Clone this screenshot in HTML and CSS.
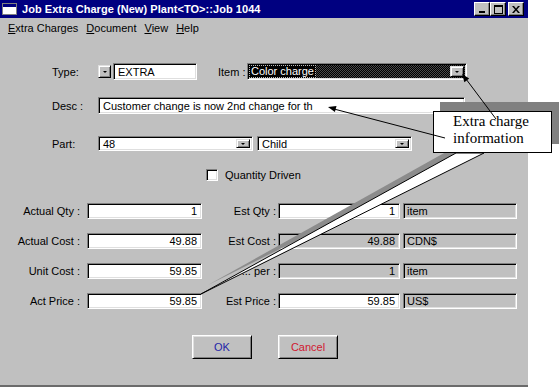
FILE: index.html
```html
<!DOCTYPE html>
<html lang="en">
<head>
    <meta charset="UTF-8">
    <title>Job Extra Charge</title>
    <link rel="stylesheet" href="styles.css">
</head>
<body>
    <div class="window">
        <div class="titlebar">
            <svg class="app-icon" width="15" height="12" viewBox="0 0 15 12">
                <rect x="0.5" y="0.5" width="14" height="11" fill="#fff" stroke="#808080"/>
                <rect x="1" y="1" width="13" height="3" fill="#000080"/>
            </svg>
            <span class="title">Job Extra Charge (New) Plant&lt;TO&gt;::Job 1044</span>
            <div class="caption-buttons">
                <span class="cap-btn"><svg width="8" height="7" viewBox="0 0 8 7"><rect x="1" y="5" width="6" height="2" fill="#000"/></svg></span>
                <span class="cap-btn"><svg width="9" height="9" viewBox="0 0 9 9"><rect x="0.5" y="0.5" width="8" height="8" fill="none" stroke="#000"/><rect x="0" y="0" width="9" height="2" fill="#000"/></svg></span>
                <span class="cap-btn close"><svg width="8" height="7" viewBox="0 0 8 7"><path d="M0 0h2l2 2.5 2-2.5h2l-3 3.5 3 3.5h-2l-2-2.5-2 2.5h-2l3-3.5z" fill="#000"/></svg></span>
            </div>
        </div>
        <div class="menubar">
            <span><u>E</u>xtra Charges</span>
            <span><u>D</u>ocument</span>
            <span><u>V</u>iew</span>
            <span><u>H</u>elp</span>
        </div>

        <div class="form">
            <div class="row row-type">
                <span class="lbl">Type:</span>
                <span class="drop-btn small"></span>
                <div class="field extra">EXTRA</div>
                <span class="lbl-item">Item :</span>
                <div class="field combo item">
                    <span class="sel">Color charge</span>
                    <span class="drop-btn"></span>
                </div>
            </div>
            <div class="row row-desc">
                <span class="lbl">Desc :</span>
                <div class="field desc">Customer change is now 2nd change for th</div>
            </div>
            <div class="row row-part">
                <span class="lbl">Part:</span>
                <div class="field combo part">
                    <span>48</span>
                    <span class="drop-btn"></span>
                </div>
                <div class="field combo child">
                    <span>Child</span>
                    <span class="drop-btn"></span>
                </div>
            </div>
            <div class="row row-check">
                <span class="checkbox"></span>
                <span>Quantity Driven</span>
            </div>

            <div class="amounts">
                <span class="alabel">Actual Qty :</span>
                <div class="field num">1</div>
                <span class="elabel">Est Qty :</span>
                <div class="field num">1</div>
                <div class="field unit">item</div>

                <span class="alabel">Actual Cost :</span>
                <div class="field num">49.88</div>
                <span class="elabel">Est Cost :</span>
                <div class="field num disabled">49.88</div>
                <div class="field unit">CDN$</div>

                <span class="alabel">Unit Cost :</span>
                <div class="field num">59.85</div>
                <span class="elabel">... per :</span>
                <div class="field num disabled">1</div>
                <div class="field unit">item</div>

                <span class="alabel">Act Price :</span>
                <div class="field num">59.85</div>
                <span class="elabel">Est Price :</span>
                <div class="field num">59.85</div>
                <div class="field unit">US$</div>
            </div>

            <div class="buttons">
                <button class="btn ok">OK</button>
                <button class="btn cancel">Cancel</button>
            </div>
        </div>
    </div>

    <!-- annotation drawn over the dialog -->
    <svg class="callout-lines" width="559" height="387" viewBox="0 0 559 387">
        <rect x="440" y="102" width="119" height="42" fill="#808080"/>
        <polygon points="462,143 492,143 208,285" fill="#8c8c8c"/>
        <polygon points="456,153 484,153 201,294" fill="#fff" stroke="#000" stroke-width="1"/>
        <rect x="433.5" y="111.5" width="118" height="41" fill="#fff" stroke="#000"/>
        <line x1="496" y1="119" x2="466" y2="79" stroke="#000"/>
        <polygon points="462,74 469.2,78.6 464.4,82.2" fill="#000"/>
        <line x1="445" y1="138" x2="334" y2="109" stroke="#000"/>
        <polygon points="328,107 336.5,106.1 334.9,111.9" fill="#000"/>
    </svg>
    <div class="callout-text">Extra charge<br>information</div>
</body>
</html>
```

FILE: styles.css
```css
body {
    margin: 0;
    width: 559px;
    height: 387px;
    overflow: hidden;
    position: relative;
    background: #fff;
    font-family: "Liberation Sans", Arial, sans-serif;
    font-size: 11px;
    color: #000;
}
.window {
    width: 528px;
    height: 385px;
    background: #c0c0c0;
    border-bottom: 2px solid #6b6b6b;
}
.titlebar {
    height: 18px;
    background: #000080;
    color: #fff;
    display: flex;
    align-items: center;
    padding-left: 2px;
}
.app-icon {
    margin-right: 5px;
}
.title {
    flex: 1;
    font-weight: bold;
    font-size: 11px;
    letter-spacing: 0.05px;
}
.caption-buttons {
    display: flex;
    margin-right: 4px;
}
.cap-btn {
    width: 16px;
    height: 14px;
    box-sizing: border-box;
    background: #c0c0c0;
    border: 1px solid;
    border-color: #fff #000 #000 #fff;
    box-shadow: inset -1px -1px #808080;
    display: flex;
    align-items: center;
    justify-content: center;
}
.cap-btn.close {
    margin-left: 2px;
}
.menubar {
    height: 20px;
    display: flex;
    align-items: center;
    gap: 8px;
    padding-left: 8px;
}
.form {
    padding-top: 25px;
}
.row {
    display: flex;
    align-items: center;
    padding-left: 52px;
}
.lbl {
    width: 46px;
}
.field {
    box-sizing: border-box;
    height: 100%;
    background: #fff;
    border: 1px solid;
    border-color: #808080 #fff #fff #808080;
    box-shadow: inset 1px 1px #000, inset -1px -1px #dfdfdf;
    display: flex;
    align-items: center;
    padding: 0 4px;
    white-space: nowrap;
    overflow: hidden;
}
.drop-btn {
    box-sizing: border-box;
    width: 14px;
    background: #c0c0c0;
    border: 1px solid;
    border-color: #dfdfdf #000 #000 #dfdfdf;
    box-shadow: inset 1px 1px #fff, inset -1px -1px #808080;
    display: flex;
    align-items: center;
    justify-content: center;
}
.drop-btn::after {
    content: "";
    border-left: 2px solid transparent;
    border-right: 2px solid transparent;
    border-top: 2px solid #000;
}
.row-type {
    height: 17px;
}
.drop-btn.small {
    width: 13px;
    height: 13px;
}
.extra {
    width: 84px;
    margin-left: 2px;
}
.lbl-item {
    margin-left: 21px;
    width: 29px;
}
.combo {
    justify-content: space-between;
    padding: 2px 2px 2px 4px;
}
.combo .drop-btn {
    height: 100%;
}
.item {
    width: 220px;
    padding-left: 2px;
    background: repeating-conic-gradient(#000 0 25%, #4a4a4a 0 50%) 0 0 / 2px 2px;
}
.sel {
    background: #000;
    color: #fff;
    outline: 1px dotted #bbb;
    padding: 0 1px;
    line-height: 11px;
}
.row-desc {
    height: 17px;
    margin-top: 17px;
}
.desc {
    width: 367px;
}
.row-part {
    height: 15px;
    margin-top: 22px;
}
.part,
.child {
    width: 155px;
}
.child {
    margin-left: 4px;
}
.row-check {
    height: 12px;
    margin-top: 18px;
    padding-left: 206px;
    gap: 7px;
}
.checkbox {
    box-sizing: border-box;
    width: 12px;
    height: 12px;
    background: #fff;
    border: 1px solid;
    border-color: #808080 #fff #fff #808080;
    box-shadow: inset 1px 1px #000, inset -1px -1px #dfdfdf;
}
.amounts {
    display: grid;
    grid-template-columns: 87px 115px 76px 122px 117px;
    grid-auto-rows: 16px;
    row-gap: 14px;
    margin-top: 22px;
    align-items: center;
}
.alabel {
    text-align: right;
    padding-right: 7px;
}
.elabel {
    text-align: right;
    padding-right: 2px;
}
.num {
    justify-content: flex-end;
}
.disabled {
    background: #c0c0c0;
}
.unit {
    margin-left: 3px;
    background: #c0c0c0;
    padding-left: 3px;
}
.buttons {
    display: flex;
    gap: 26px;
    padding-left: 192px;
    margin-top: 26px;
}
.btn {
    width: 60px;
    height: 24px;
    background: #c0c0c0;
    border: 1px solid;
    border-color: #fff #000 #000 #fff;
    box-shadow: inset 1px 1px #dfdfdf, inset -1px -1px #808080;
    font-family: "Liberation Sans", Arial, sans-serif;
    font-size: 11px;
    padding: 0;
}
.ok {
    color: #2424a8;
}
.cancel {
    color: #d01830;
}
.callout-lines {
    position: absolute;
    top: 0;
    left: 0;
}
.callout-text {
    position: absolute;
    left: 453px;
    top: 113px;
    font-family: "Liberation Serif", "Times New Roman", serif;
    font-size: 15px;
    line-height: 17px;
}
```
